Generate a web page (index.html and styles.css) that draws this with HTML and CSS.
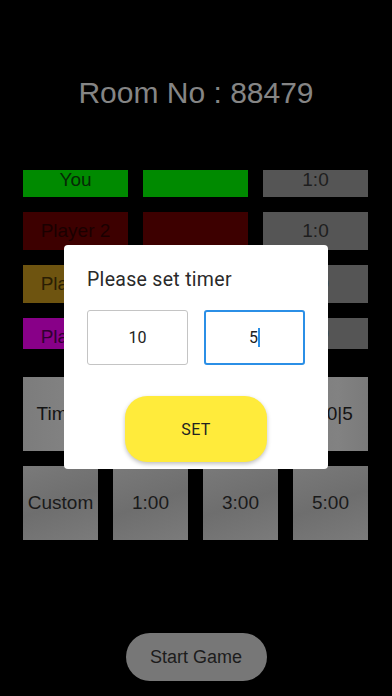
FILE: index.html
```html
<!DOCTYPE html>
<html lang="en">
<head>
<meta charset="utf-8">
<title>Room</title>
<link rel="stylesheet" href="styles.css">
</head>
<body>
<div class="screen">
  <h1 class="room">Room No : 88479</h1>
  <div class="board">
    <div class="row cols3 r1">
      <div class="cell green top">You</div>
      <div class="cell green"></div>
      <div class="cell grey top">1:0</div>
    </div>
    <div class="row cols3 r2">
      <div class="cell red">Player 2</div>
      <div class="cell red"></div>
      <div class="cell grey">1:0</div>
    </div>
    <div class="row cols3 r3">
      <div class="cell gold">Player 3</div>
      <div class="cell gold"></div>
      <div class="cell grey">1:0</div>
    </div>
    <div class="row cols3 r4">
      <div class="cell purple low">Player 4</div>
      <div class="cell purple"></div>
      <div class="cell grey">1:0</div>
    </div>
    <div class="row cols4 r5">
      <div class="cell light">Timer</div>
      <div class="cell light"></div>
      <div class="cell light"></div>
      <div class="cell light shift">10|5</div>
    </div>
    <div class="row cols4 r6">
      <div class="cell shade">Custom</div>
      <div class="cell shade">1:00</div>
      <div class="cell shade">3:00</div>
      <div class="cell shade">5:00</div>
    </div>
  </div>
  <button class="start">Start Game</button>

  <div class="dialog">
    <div class="dlg-title">Please set timer</div>
    <div class="inputs">
      <div class="field">10</div>
      <div class="field active">5<span class="caret"></span></div>
    </div>
    <button class="set">SET</button>
  </div>
</div>
</body>
</html>
```

FILE: styles.css
```css
html, body {
  margin: 0;
  padding: 0;
  background: #000;
}
body {
  font-family: "Liberation Sans", Arial, sans-serif;
}
.screen {
  position: relative;
  width: 392px;
  height: 696px;
  display: flex;
  flex-direction: column;
  overflow: hidden;
}
.room {
  margin: 76px 0 0 0;
  height: 34px;
  line-height: 34px;
  font-size: 30px;
  font-weight: normal;
  color: #858585;
  text-align: center;
}
.board {
  margin-top: 60px;
  padding: 0 24px 0 23px;
  display: flex;
  flex-direction: column;
  gap: 15px;
}
.row {
  display: grid;
  gap: 15px;
}
.cols3 { grid-template-columns: repeat(3, 1fr); }
.cols4 { grid-template-columns: repeat(4, 1fr); }
.r1 { height: 27px; }
.r2 { height: 38px; }
.r3 { height: 38px; }
.r4 { height: 31px; }
.r5 { height: 74px; margin-top: 13px; }
.r6 { height: 74px; }
.cell {
  display: flex;
  align-items: center;
  justify-content: center;
  font-size: 19px;
  color: #141414;
  white-space: nowrap;
  overflow: hidden;
}
.cell.top {
  align-items: flex-start;
  line-height: 18px;
  padding-top: 1px;
}
.cell.low { padding-top: 6px; box-sizing: border-box; }
.cell.shift { padding-left: 8px; box-sizing: border-box; }
.green { background: #008a00; color: #062806; }
.red { background: #3d0000; color: #1a0000; }
.gold { background: #6e5410; color: #2a1e04; }
.purple { background: #880088; color: #300030; }
.grey { background: #555555; color: #1e1e1e; }
.light { background: linear-gradient(90deg, #7c7c7c, #828282 60%, #7a7a7a); }
.shade { background: linear-gradient(160deg, #7a7a7a, #6e6e6e 50%, #7b7b7b); color: #1a1a1a; }

.start {
  margin: auto auto 15px auto;
  width: 141px;
  height: 48px;
  border: none;
  border-radius: 24px;
  background: #777777;
  color: #1c1c1c;
  font-family: "Liberation Sans", Arial, sans-serif;
  font-size: 18px;
  padding: 0;
}

.dialog {
  position: absolute;
  left: 64px;
  top: 245px;
  width: 264px;
  height: 224px;
  box-sizing: border-box;
  background: #fff;
  border-radius: 4px;
  padding: 24px 23px 0 23px;
  font-family: Roboto, "Liberation Sans", sans-serif;
  display: flex;
  flex-direction: column;
}
.dlg-title {
  font-size: 19.5px;
  line-height: 22px;
  color: #2a2a2a;
  letter-spacing: 0.3px;
}
.inputs {
  margin-top: 19px;
  display: grid;
  grid-template-columns: 1fr 1fr;
  gap: 16px;
}
.field {
  height: 55px;
  box-sizing: border-box;
  border: 1px solid #c4c4c4;
  border-radius: 3px;
  display: flex;
  align-items: center;
  justify-content: center;
  font-size: 16px;
  color: #222;
}
.field.active {
  border: 2px solid #2b8fe6;
}
.caret {
  display: inline-block;
  width: 2px;
  height: 19px;
  background: #2b8fe6;
  margin-left: 0;
}
.set {
  margin: 31px auto 0 auto;
  width: 142px;
  height: 66px;
  border: none;
  border-radius: 22px;
  background: #ffeb3b;
  color: #222;
  font-family: Roboto, "Liberation Sans", sans-serif;
  font-size: 16px;
  font-weight: 400;
  letter-spacing: 0.4px;
  box-shadow: 0 2px 4px rgba(0,0,0,0.25);
  padding: 0;
}
```
